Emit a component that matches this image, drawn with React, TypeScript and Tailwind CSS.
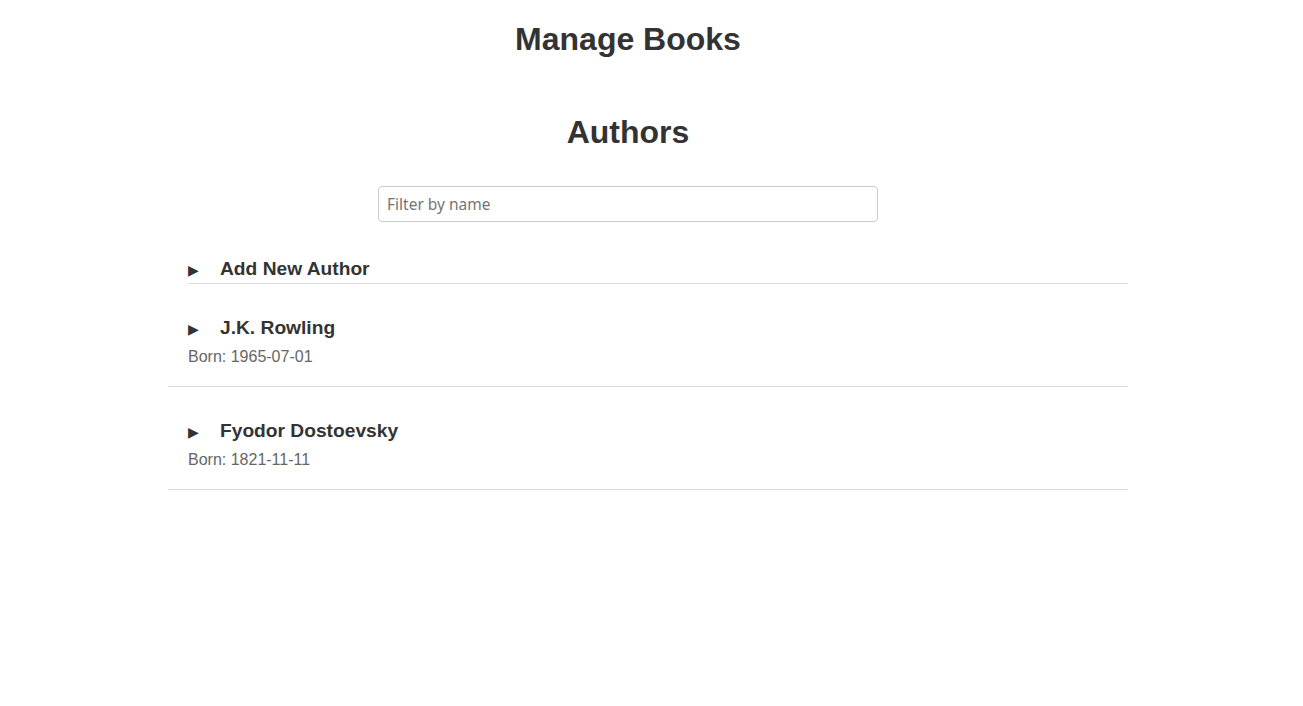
const authors = [
  { name: 'J.K. Rowling', born: '1965-07-01' },
  { name: 'Fyodor Dostoevsky', born: '1821-11-11' },
];

function Toggle({ label }: { label: string }) {
  return (
    <div className="cursor-pointer text-[19.2px] font-bold leading-[22px] text-[#333333]">
      <span className="inline-block w-[32px] font-['DejaVu_Sans',sans-serif] text-[14px] font-normal leading-none">
        ▶
      </span>
      {label}
    </div>
  );
}

function AuthorItem({ name, born }: { name: string; born: string }) {
  return (
    <div className="border-b border-[#dddddd] pl-5 pt-[33px] pb-[20px]">
      <Toggle label={name} />
      <p className="mt-[9px] text-[16px] leading-[18px] text-[#666666]">Born: {born}</p>
    </div>
  );
}

export default function App() {
  return (
    <div className="min-h-screen bg-white font-['Liberation_Sans',Arial,sans-serif] text-[#333333]">
      <div className="ml-[168px] w-[960px]">
        <div className="pr-10 text-center">
          <h1 className="pt-[21px] text-[32px] font-bold leading-[37px]">Manage Books</h1>
          <h2 className="mt-[56px] text-[32px] font-bold leading-[37px]">Authors</h2>
          <input
            type="text"
            placeholder="Filter by name"
            className="mt-[35px] h-[36px] w-[500px] rounded border border-[#cccccc] px-2 font-['Noto_Sans',sans-serif] text-[15.5px] text-[#333333] placeholder-[#757575] focus:outline-none"
          />
        </div>

        <div className="ml-5 mt-[36px] border-b border-[#dddddd] pb-[3px]">
          <Toggle label="Add New Author" />
        </div>

        {authors.map((a) => (
          <AuthorItem key={a.name} name={a.name} born={a.born} />
        ))}
      </div>
    </div>
  );
}
